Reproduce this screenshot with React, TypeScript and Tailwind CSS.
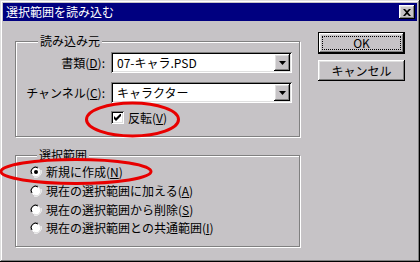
import React from "react";

const bevelOut =
  "shadow-[inset_-1px_-1px_0_#000,inset_1px_1px_0_#fff,inset_-2px_-2px_0_#808080,inset_2px_2px_0_#dfdfdf]";
const bevelIn =
  "shadow-[inset_1px_1px_0_#808080,inset_-1px_-1px_0_#fff,inset_2px_2px_0_#000,inset_-2px_-2px_0_#dfdfdf]";

function U({ c }: { c: string }) {
  return <span className="underline underline-offset-[1px]">{c}</span>;
}

function Combo({ text }: { text: string }) {
  return (
    <div className={`w-[181px] h-[21px] bg-white flex items-center p-[2px] ${bevelIn}`}>
      <div className="flex-1 pl-[4px] leading-none">{text}</div>
      <div className={`w-[16px] h-[17px] bg-[#c6c3c6] flex items-center justify-center ${bevelOut}`}>
        <svg width="7" height="4" viewBox="0 0 7 4">
          <path d="M0 0h7L3.5 4z" fill="#000" />
        </svg>
      </div>
    </div>
  );
}

function Radio({ checked }: { checked?: boolean }) {
  return (
    <svg width="12" height="12" viewBox="0 0 12 12" className="shrink-0">
      <path d="M1 8 A5.5 5.5 0 0 1 8 1" stroke="#808080" strokeWidth="1" fill="none" />
      <path d="M11 4 A5.5 5.5 0 0 1 4 11" stroke="#fff" strokeWidth="1" fill="none" />
      <circle cx="6" cy="6" r="4.5" fill="#fff" />
      <path d="M2 8 A4.3 4.3 0 0 1 8 2" stroke="#000" strokeWidth="1" fill="none" />
      <path d="M10 4 A4.3 4.3 0 0 1 4 10" stroke="#dfdfdf" strokeWidth="1" fill="none" />
      {checked && <circle cx="6" cy="6" r="2" fill="#000" />}
    </svg>
  );
}

function GroupLabel({ children, left }: { children: React.ReactNode; left: string }) {
  return (
    <div className={`absolute top-[-8px] ${left} bg-[#c6c3c6] px-[2px] leading-[14px]`}>{children}</div>
  );
}

export default function App() {
  return (
    <div
      className="w-[420px] h-[262px] bg-[#c6c3c6] p-[3px] relative text-[12px] text-black shadow-[inset_-1px_-1px_0_#000,inset_1px_1px_0_#dfdfdf,inset_-2px_-2px_0_#808080,inset_2px_2px_0_#fff]"
      style={{ fontFamily: '"Noto Sans CJK JP", "MS UI Gothic", sans-serif' }}
    >
      {/* Title bar */}
      <div className="h-[18px] bg-[#000080] flex items-center justify-between pl-[3px] pr-[2px]">
        <span className="text-white leading-none">選択範囲を読み込む</span>
        <div className={`w-[16px] h-[14px] bg-[#c6c3c6] flex items-center justify-center ${bevelOut}`}>
          <svg width="8" height="7" viewBox="0 0 8 7">
            <path d="M0 0h2l2 2 2-2h2L5 3.5 8 7H6L4 5 2 7H0l3-3.5z" fill="#000" />
          </svg>
        </div>
      </div>

      <div className="flex">
        {/* Left column */}
        <div className="ml-[12px] w-[286px]">
          {/* Group 1 */}
          <div className="relative mt-[20px] h-[96px] w-[285px] border border-[#808080] shadow-[1px_1px_0_#fff,inset_1px_1px_0_#fff]">
            <GroupLabel left="left-[22px]">読み込み元</GroupLabel>
            <div className="flex items-center mt-[10px]">
              <div className="w-[89px] text-right pr-[0px]">
                書類(<U c="D" />):
              </div>
              <div className="ml-[6px]">
                <Combo text="07-キャラ.PSD" />
              </div>
            </div>
            <div className="flex items-center mt-[9px]">
              <div className="w-[89px] text-right">
                チャンネル(<U c="C" />):
              </div>
              <div className="ml-[6px]">
                <Combo text="キャラクター" />
              </div>
            </div>
            <div className="flex items-center mt-[8px] ml-[95px]">
              <div className={`w-[13px] h-[13px] bg-white flex items-center justify-center ${bevelIn}`}>
                <svg width="7" height="7" viewBox="0 0 7 7">
                  <path d="M0 2v3l2 2 5-5V-1L2 4z" fill="#000" />
                </svg>
              </div>
              <span className="ml-[4px] leading-none">
                反転(<U c="V" />)
              </span>
            </div>
          </div>

          {/* Group 2 */}
          <div className="relative mt-[18px] h-[92px] w-[285px] border border-[#808080] shadow-[1px_1px_0_#fff,inset_1px_1px_0_#fff] pt-[7px]">
            <GroupLabel left="left-[21px]">選択範囲</GroupLabel>
            {[
              { t: "新規に作成(", k: "N", c: true },
              { t: "現在の選択範囲に加える(", k: "A" },
              { t: "現在の選択範囲から削除(", k: "S" },
              { t: "現在の選択範囲との共通範囲(", k: "I" },
            ].map((r, i) => (
              <div key={i} className="flex items-center h-[18.7px] ml-[14px]">
                <Radio checked={r.c} />
                <span className="ml-[4px] leading-none">
                  {r.t}
                  <U c={r.k} />)
                </span>
              </div>
            ))}
          </div>
        </div>

        {/* Right column: buttons */}
        <div className="ml-[17px] mt-[11px] flex flex-col gap-[6px]">
          <div className="w-[87px] h-[22px] border border-black bg-[#c6c3c6]">
            <div className={`w-full h-full flex items-center justify-center p-[3px] ${bevelOut}`}>
              <div className="w-full h-full border border-dotted border-black flex items-center justify-center leading-none">
                OK
              </div>
            </div>
          </div>
          <div className={`w-[87px] h-[21px] flex items-center justify-center leading-none ${bevelOut}`}>
            キャンセル
          </div>
        </div>
      </div>

      {/* Red annotation ellipses */}
      <svg className="absolute inset-0 pointer-events-none" width="420" height="262" viewBox="0 0 420 262">
        <ellipse cx="132.5" cy="119.5" rx="46" ry="16.5" fill="none" stroke="#e80000" strokeWidth="3" />
        <ellipse cx="76" cy="171.5" rx="75" ry="12" fill="none" stroke="#e80000" strokeWidth="3" />
      </svg>
    </div>
  );
}
